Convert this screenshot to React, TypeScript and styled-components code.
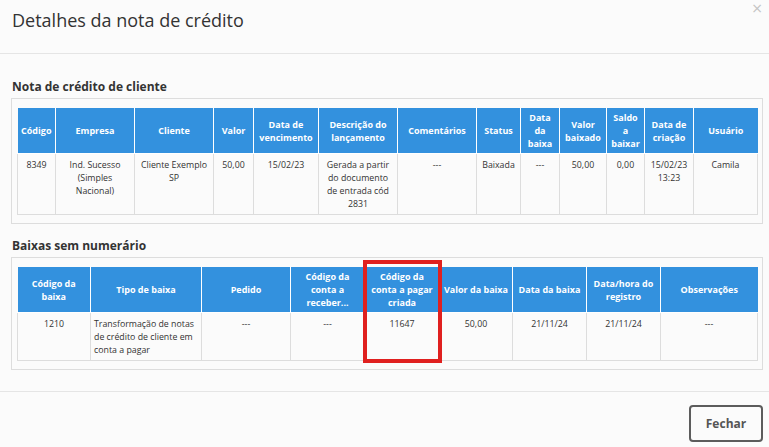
import React from 'react'
import styled, { createGlobalStyle } from 'styled-components'

const GlobalStyle = createGlobalStyle`
  html, body {
    margin: 0;
    padding: 0;
    background: #fbfbfb;
  }
  body {
    font-family: 'Open Sans', 'Noto Sans', sans-serif;
    color: #333;
  }
  * {
    box-sizing: border-box;
  }
`

type Column = { title: string; width: number; align?: 'left' | 'center' }

const creditColumns: Column[] = [
  { title: 'Código', width: 38 },
  { title: 'Empresa', width: 79 },
  { title: 'Cliente', width: 79 },
  { title: 'Valor', width: 40 },
  { title: 'Data de vencimento', width: 65 },
  { title: 'Descrição do lançamento', width: 79 },
  { title: 'Comentários', width: 79 },
  { title: 'Status', width: 44 },
  { title: 'Data da baixa', width: 39 },
  { title: 'Valor baixado', width: 47 },
  { title: 'Saldo a baixar', width: 38 },
  { title: 'Data de criação', width: 49 },
  { title: 'Usuário', width: 64 },
]

const creditRow = [
  '8349',
  'Ind. Sucesso (Simples Nacional)',
  'Cliente Exemplo SP',
  '50,00',
  '15/02/23',
  'Gerada a partir do documento de entrada cód 2831',
  '---',
  'Baixada',
  '---',
  '50,00',
  '0,00',
  '15/02/23 13:23',
  'Camila',
]

const writeOffColumns: Column[] = [
  { title: 'Código da baixa', width: 73 },
  { title: 'Tipo de baixa', width: 111, align: 'left' },
  { title: 'Pedido', width: 89 },
  { title: 'Código da conta a receber...', width: 74 },
  { title: 'Código da conta a pagar criada', width: 75 },
  { title: 'Valor da baixa', width: 73 },
  { title: 'Data da baixa', width: 74 },
  { title: 'Data/hora do registro', width: 74 },
  { title: 'Observações', width: 97 },
]

const writeOffRow = [
  '1210',
  'Transformação de notas de crédito de cliente em conta a pagar',
  '---',
  '---',
  '11647',
  '50,00',
  '21/11/24',
  '21/11/24',
  '---',
]

const DataTable = ({ columns, row }: { columns: Column[]; row: string[] }) => (
  <Table>
    <colgroup>
      {columns.map((c) => (
        <col key={c.title} style={{ width: c.width }} />
      ))}
    </colgroup>
    <thead>
      <tr>
        {columns.map((c) => (
          <HeadCell key={c.title}>{c.title}</HeadCell>
        ))}
      </tr>
    </thead>
    <tbody>
      <tr>
        {row.map((value, i) => (
          <BodyCell key={i} $align={columns[i].align}>
            {value}
          </BodyCell>
        ))}
      </tr>
    </tbody>
  </Table>
)

const App = () => (
  <>
    <GlobalStyle />
    <Dialog>
      <Header>
        <Title>Detalhes da nota de crédito</Title>
        <CloseButton aria-label="Fechar">×</CloseButton>
      </Header>
      <Body>
        <SectionTitle>Nota de crédito de cliente</SectionTitle>
        <Panel>
          <DataTable columns={creditColumns} row={creditRow} />
        </Panel>
        <SectionTitle $spaced>Baixas sem numerário</SectionTitle>
        <Panel>
          <DataTable columns={writeOffColumns} row={writeOffRow} />
          <Highlight />
        </Panel>
      </Body>
      <Footer>
        <CloseAction>Fechar</CloseAction>
      </Footer>
    </Dialog>
  </>
)

// dialog
const Dialog = styled.div`
  width: 769px;
  height: 447px;
  background: #fbfbfb;
  position: relative;
  overflow: hidden;
`

// header
const Header = styled.div`
  height: 54px;
  padding: 7px 12px 0;
  border-bottom: 1px solid #e5e5e5;
`

const Title = styled.h4`
  margin: 0;
  font-size: 18px;
  line-height: 26px;
  font-weight: 400;
  color: #333;
`

const CloseButton = styled.button`
  position: absolute;
  top: 0;
  right: 6px;
  border: 0;
  padding: 0;
  background: none;
  font-family: 'DejaVu Sans', sans-serif;
  font-size: 14px;
  line-height: 16px;
  color: #c4c4c4;
  cursor: pointer;
`

// body
const Body = styled.div`
  padding: 24px 6px 21px 11px;
`

const SectionTitle = styled.h5<{ $spaced?: boolean }>`
  margin: ${({ $spaced }) => ($spaced ? '13px' : '0')} 0 2px 1px;
  font-size: 12px;
  line-height: 18px;
  font-weight: 700;
  color: #333;
`

const Panel = styled.div`
  position: relative;
  border: 1px solid #dddddd;
  padding: 9px 5px 8px;
`

const Table = styled.table`
  width: 740px;
  table-layout: fixed;
  border-collapse: collapse;
  font-size: 9px;
  line-height: 13px;
`

const HeadCell = styled.th`
  background: #3391de;
  color: #fff;
  font-weight: 700;
  text-align: center;
  vertical-align: middle;
  padding: 3px;
  border: 1px solid #fff;
  border-top: 0;
  &:first-child {
    border-left: 0;
  }
  &:last-child {
    border-right: 0;
  }
`

const BodyCell = styled.td<{ $align?: 'left' | 'center' }>`
  text-align: ${({ $align }) => $align || 'center'};
  vertical-align: top;
  padding: 5px 3px 3px;
  border: 1px solid #dddddd;
  color: #333;
  font-size: 8.8px;
`

const Highlight = styled.div`
  position: absolute;
  left: 351px;
  top: 2px;
  width: 79px;
  height: 103px;
  border: 4px solid #e0201f;
  pointer-events: none;
`

// footer
const Footer = styled.div`
  display: flex;
  justify-content: flex-end;
  border-top: 1px solid #e5e5e5;
  padding: 13px 6px 0 0;
`

const CloseAction = styled.button`
  width: 74px;
  height: 37px;
  border: 2px solid #5c5c5c;
  border-radius: 4px;
  background: #fbfbfb;
  font-family: 'Open Sans', sans-serif;
  font-size: 12px;
  font-weight: 700;
  color: #555;
  cursor: pointer;
`

export default App
